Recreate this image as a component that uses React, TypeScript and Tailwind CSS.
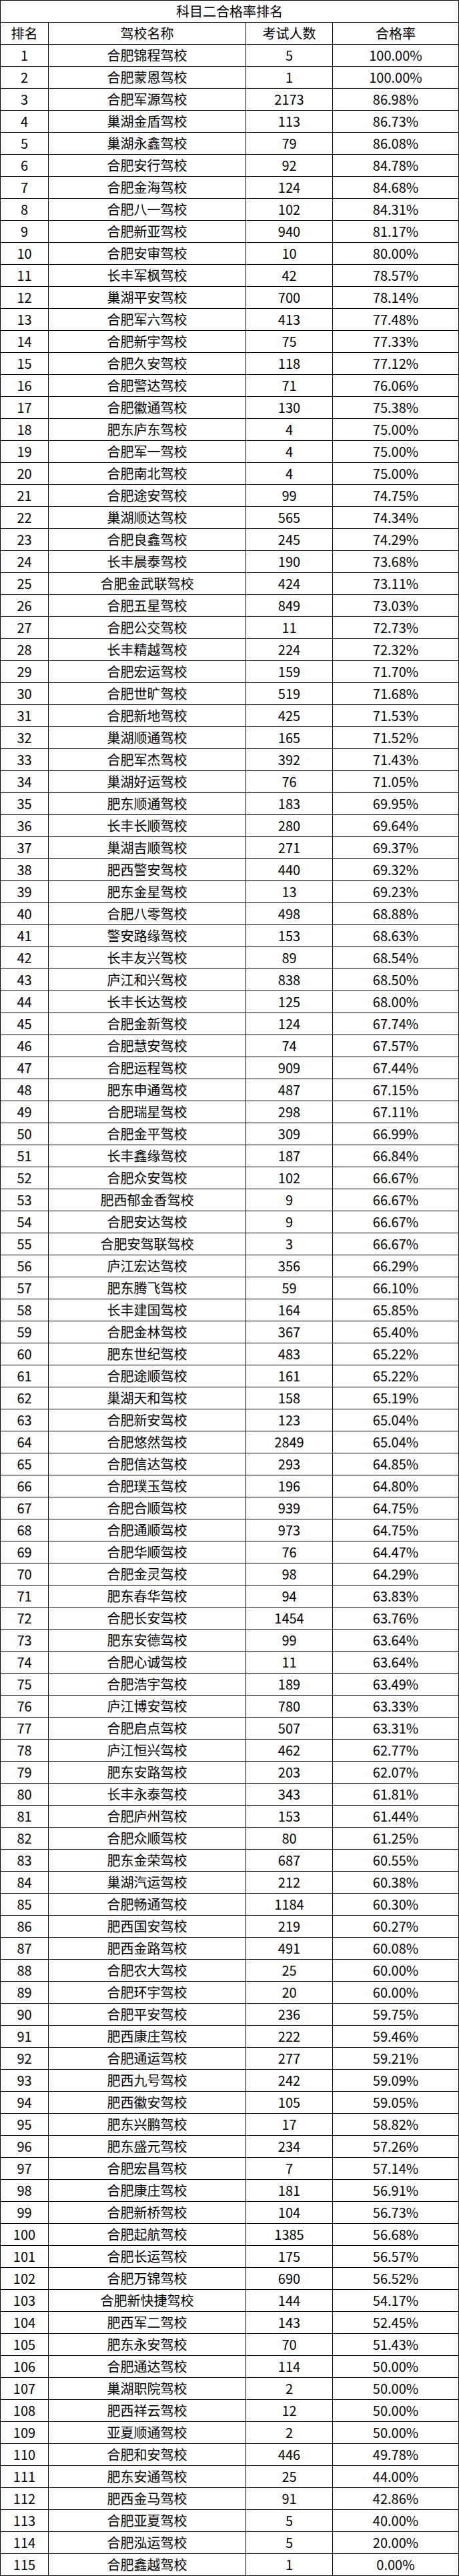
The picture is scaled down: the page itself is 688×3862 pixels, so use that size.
const data = `合肥锦程驾校,5,100.00%
合肥蒙恩驾校,1,100.00%
合肥军源驾校,2173,86.98%
巢湖金盾驾校,113,86.73%
巢湖永鑫驾校,79,86.08%
合肥安行驾校,92,84.78%
合肥金海驾校,124,84.68%
合肥八一驾校,102,84.31%
合肥新亚驾校,940,81.17%
合肥安审驾校,10,80.00%
长丰军枫驾校,42,78.57%
巢湖平安驾校,700,78.14%
合肥军六驾校,413,77.48%
合肥新宇驾校,75,77.33%
合肥久安驾校,118,77.12%
合肥警达驾校,71,76.06%
合肥徽通驾校,130,75.38%
肥东庐东驾校,4,75.00%
合肥军一驾校,4,75.00%
合肥南北驾校,4,75.00%
合肥途安驾校,99,74.75%
巢湖顺达驾校,565,74.34%
合肥良鑫驾校,245,74.29%
长丰晨泰驾校,190,73.68%
合肥金武联驾校,424,73.11%
合肥五星驾校,849,73.03%
合肥公交驾校,11,72.73%
长丰精越驾校,224,72.32%
合肥宏运驾校,159,71.70%
合肥世旷驾校,519,71.68%
合肥新地驾校,425,71.53%
巢湖顺通驾校,165,71.52%
合肥军杰驾校,392,71.43%
巢湖好运驾校,76,71.05%
肥东顺通驾校,183,69.95%
长丰长顺驾校,280,69.64%
巢湖吉顺驾校,271,69.37%
肥西警安驾校,440,69.32%
肥东金星驾校,13,69.23%
合肥八零驾校,498,68.88%
警安路缘驾校,153,68.63%
长丰友兴驾校,89,68.54%
庐江和兴驾校,838,68.50%
长丰长达驾校,125,68.00%
合肥金新驾校,124,67.74%
合肥慧安驾校,74,67.57%
合肥运程驾校,909,67.44%
肥东申通驾校,487,67.15%
合肥瑞星驾校,298,67.11%
合肥金平驾校,309,66.99%
长丰鑫缘驾校,187,66.84%
合肥众安驾校,102,66.67%
肥西郁金香驾校,9,66.67%
合肥安达驾校,9,66.67%
合肥安驾联驾校,3,66.67%
庐江宏达驾校,356,66.29%
肥东腾飞驾校,59,66.10%
长丰建国驾校,164,65.85%
合肥金林驾校,367,65.40%
肥东世纪驾校,483,65.22%
合肥途顺驾校,161,65.22%
巢湖天和驾校,158,65.19%
合肥新安驾校,123,65.04%
合肥悠然驾校,2849,65.04%
合肥信达驾校,293,64.85%
合肥璞玉驾校,196,64.80%
合肥合顺驾校,939,64.75%
合肥通顺驾校,973,64.75%
合肥华顺驾校,76,64.47%
合肥金灵驾校,98,64.29%
肥东春华驾校,94,63.83%
合肥长安驾校,1454,63.76%
肥东安德驾校,99,63.64%
合肥心诚驾校,11,63.64%
合肥浩宇驾校,189,63.49%
庐江博安驾校,780,63.33%
合肥启点驾校,507,63.31%
庐江恒兴驾校,462,62.77%
肥东安路驾校,203,62.07%
长丰永泰驾校,343,61.81%
合肥庐州驾校,153,61.44%
合肥众顺驾校,80,61.25%
肥东金荣驾校,687,60.55%
巢湖汽运驾校,212,60.38%
合肥畅通驾校,1184,60.30%
肥西国安驾校,219,60.27%
肥西金路驾校,491,60.08%
合肥农大驾校,25,60.00%
合肥环宇驾校,20,60.00%
合肥平安驾校,236,59.75%
肥西康庄驾校,222,59.46%
合肥通运驾校,277,59.21%
肥西九号驾校,242,59.09%
肥西徽安驾校,105,59.05%
肥东兴鹏驾校,17,58.82%
肥东盛元驾校,234,57.26%
合肥宏昌驾校,7,57.14%
合肥康庄驾校,181,56.91%
合肥新桥驾校,104,56.73%
合肥起航驾校,1385,56.68%
合肥长运驾校,175,56.57%
合肥万锦驾校,690,56.52%
合肥新快捷驾校,144,54.17%
肥西军二驾校,143,52.45%
肥东永安驾校,70,51.43%
合肥通达驾校,114,50.00%
巢湖职院驾校,2,50.00%
肥西祥云驾校,12,50.00%
亚夏顺通驾校,2,50.00%
合肥和安驾校,446,49.78%
肥东安通驾校,25,44.00%
肥西金马驾校,91,42.86%
合肥亚夏驾校,5,40.00%
合肥泓运驾校,5,20.00%
合肥鑫越驾校,1,0.00%`
  .split('\n')
  .map((line) => line.split(','))

function Row(props: { cells: string[] }) {
  const { cells } = props
  return (
    <div className="grid grid-cols-[72px_296px_130px_1fr] h-[33px]">
      {cells.map((c, i) => (
        <div
          key={i}
          className="flex items-center justify-center border-r border-b border-black"
        >
          {c}
        </div>
      ))}
    </div>
  )
}

export default function App() {
  return (
    <div
      className="w-[688px] bg-white text-black text-[20px] leading-none border-t border-l border-black"
      style={{ fontFamily: '"Noto Sans CJK SC", "Noto Sans", sans-serif' }}
    >
      <div className="h-[33px] flex items-center justify-center border-r border-b border-black">
        科目二合格率排名
      </div>
      <Row cells={['排名', '驾校名称', '考试人数', '合格率']} />
      {data.map((d, i) => (
        <Row key={i} cells={[String(i + 1), d[0], d[1], d[2]]} />
      ))}
    </div>
  )
}
